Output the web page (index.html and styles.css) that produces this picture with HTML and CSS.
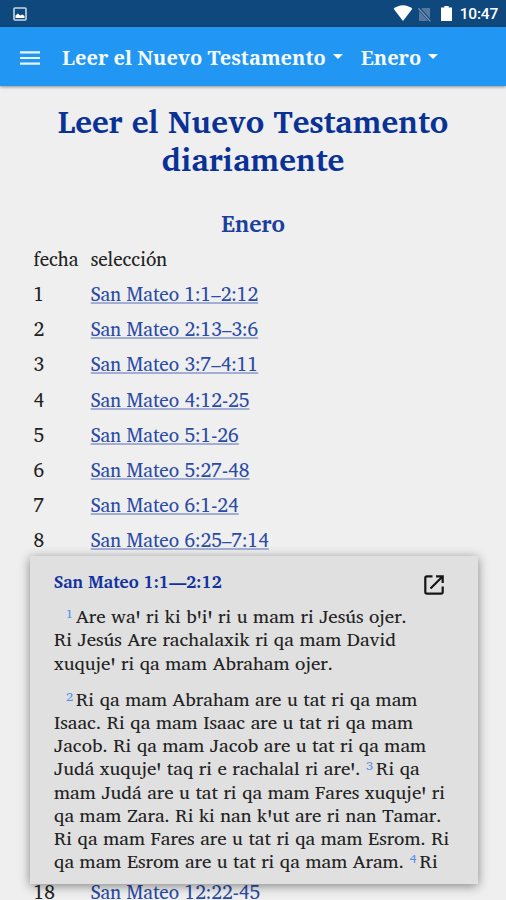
FILE: index.html
```html
<!DOCTYPE html>
<html lang="es">
<head>
<meta charset="utf-8">
<title>Leer el Nuevo Testamento</title>
<link rel="stylesheet" href="styles.css">
</head>
<body>
<div class="status">
  <svg class="pic" width="14" height="14" viewBox="0 0 14 14"><rect x="1" y="1" width="12" height="12" rx="1" fill="none" stroke="#c5d6e8" stroke-width="1.6"/><path d="M2.500 11V8.500L5 6.500l2 2 2.500-1 2 1.500v2z" fill="#fff"/></svg>
  <div class="sys">
    <svg class="wifi" width="20" height="16" viewBox="0 0 20 16"><path d="M10 16L.6 3.800Q4.800.3 10 .3t9.400 3.500z" fill="#fff"/></svg>
    <svg class="sim" width="13" height="15" viewBox="0 0 13 15"><path d="M4 1h8v10.500L3.500 2zM1 4l9.500 10H1z" fill="#56789f"/><path d="M.5 1.500l12 12.800" stroke="#7d99b8" stroke-width="1.200"/></svg>
    <svg class="bat" width="11" height="15" viewBox="0 0 11 15"><path d="M3.300 0h4.400v1.600H11V15H0V1.600h3.300z" fill="#fff"/></svg>
    <span class="time">10:47</span>
  </div>
</div>
<header class="bar">
  <svg class="menu" width="20" height="14" viewBox="0 0 20 14"><path d="M0 1.300h20M0 7h20M0 12.700h20" stroke="#e9f5fe" stroke-width="2.200"/></svg>
  <span class="drop">Leer el Nuevo Testamento<i class="caret"></i></span>
  <span class="drop second">Enero<i class="caret"></i></span>
</header>
<main>
  <h1>Leer el Nuevo Testamento<br>diariamente</h1>
  <h2>Enero</h2>
  <div class="plan">
    <div class="row"><span>fecha</span><span>selección</span></div>
    <div class="row"><span>1</span><a>San Mateo 1:1–2:12</a></div>
    <div class="row"><span>2</span><a>San Mateo 2:13–3:6</a></div>
    <div class="row"><span>3</span><a>San Mateo 3:7–4:11</a></div>
    <div class="row"><span>4</span><a>San Mateo 4:12-25</a></div>
    <div class="row"><span>5</span><a>San Mateo 5:1-26</a></div>
    <div class="row"><span>6</span><a>San Mateo 5:27-48</a></div>
    <div class="row"><span>7</span><a>San Mateo 6:1-24</a></div>
    <div class="row"><span>8</span><a>San Mateo 6:25–7:14</a></div>
    <div class="row last"><span>18</span><a>San Mateo 12:22-45</a></div>
  </div>
</main>
<section class="popup">
  <div class="head"><h3>San Mateo 1:1—2:12</h3>
    <svg class="open" width="20" height="20" viewBox="0 0 20 20" fill="none" stroke="#161616" stroke-width="2.200"><path d="M8.500 1.300H3Q1.300 1.300 1.300 3v14q0 1.700 1.700 1.700h14q1.700 0 1.700-1.700v-5.500"/><path d="M12 1.300h6.700V8M18.300 1.700L6.500 13.500"/></svg>
  </div>
  <p><sup>1</sup>Are waꞌ ri ki bꞌiꞌ ri u mam ri Jesús ojer.<br>Ri Jesús Are rachalaxik ri qa mam David<br>xuqujeꞌ ri qa mam Abraham ojer.</p>
  <p><sup>2</sup>Ri qa mam Abraham are u tat ri qa mam<br>Isaac. Ri qa mam Isaac are u tat ri qa mam<br>Jacob. Ri qa mam Jacob are u tat ri qa mam<br>Judá xuqujeꞌ taq ri e rachalal ri areꞌ. <sup>3</sup>Ri qa<br>mam Judá are u tat ri qa mam Fares xuqujeꞌ ri<br>qa mam Zara. Ri ki nan kꞌut are ri nan Tamar.<br>Ri qa mam Fares are u tat ri qa mam Esrom. Ri<br>qa mam Esrom are u tat ri qa mam Aram. <sup>4</sup>Ri</p>
</section>
</body>
</html>
```
FILE: styles.css
```css
*{box-sizing:border-box}
body{margin:0;height:900px;overflow:hidden;background:#efefef;color:#222;font:19px/35.1px "Charis SIL","DejaVu Serif Condensed",serif}
h1,h2,h3,p{margin:0}
svg{display:block}
.status{height:27px;background:#0f487c;display:flex;justify-content:space-between;padding:0 8px 0 13px}
.pic{margin-top:7px}
.sys{display:flex;align-items:flex-start}
.wifi{margin-top:5px}
.sim{margin:7px 10px 0 5px}
.bat{margin:6px 8px 0 0}
.time{font:500 15.5px/29px Roboto,sans-serif;color:#fff;letter-spacing:-.2px}
.bar{height:59px;background:#2196f3;display:flex;align-items:center;padding:2px 0 0 20px;box-shadow:0 1px 3px rgba(0,0,0,.4)}
.drop{display:flex;align-items:center;margin-left:22px;color:#f4faff;font:bold 20px/30px "Noto Serif","DejaVu Serif Condensed",serif;white-space:nowrap}
.drop.second{margin-left:18px}
.caret{border:5px solid transparent;border-top-color:#fff;border-bottom:0;margin:-2px 0 0 7px}
main{padding:16px 33.5px 0}
h1{font-size:31.6px;line-height:38px;color:#0a3296;text-align:center;white-space:nowrap}
h2{font-size:23px;line-height:36px;margin-top:26.5px;color:#1a409c;text-align:center}
.row{display:grid;grid-template-columns:57.2px 1fr;height:35.15px;white-space:nowrap}
.row:first-child{height:35.6px}
.row a{color:#2b4ba5;text-decoration:underline 1.5px #a3aed4;justify-self:start}
.row.last{margin-top:316.4px}
.popup{position:absolute;left:30px;top:556px;width:448px;height:328px;padding:0 24px;background:#e0e0e0;box-shadow:0 2px 10px rgba(0,0,0,.45);white-space:nowrap;font-size:18.95px;line-height:23.15px}
.head{display:flex;justify-content:space-between;height:48.3px;padding-right:10px}
h3{font-size:17.1px;line-height:52px;color:#1232a0}
.open{margin-top:19px}
p{text-indent:12px;margin-bottom:13.2px}
sup{font-size:12.5px;line-height:0;vertical-align:5px;color:#4f8fe6;margin-right:3px}
```
